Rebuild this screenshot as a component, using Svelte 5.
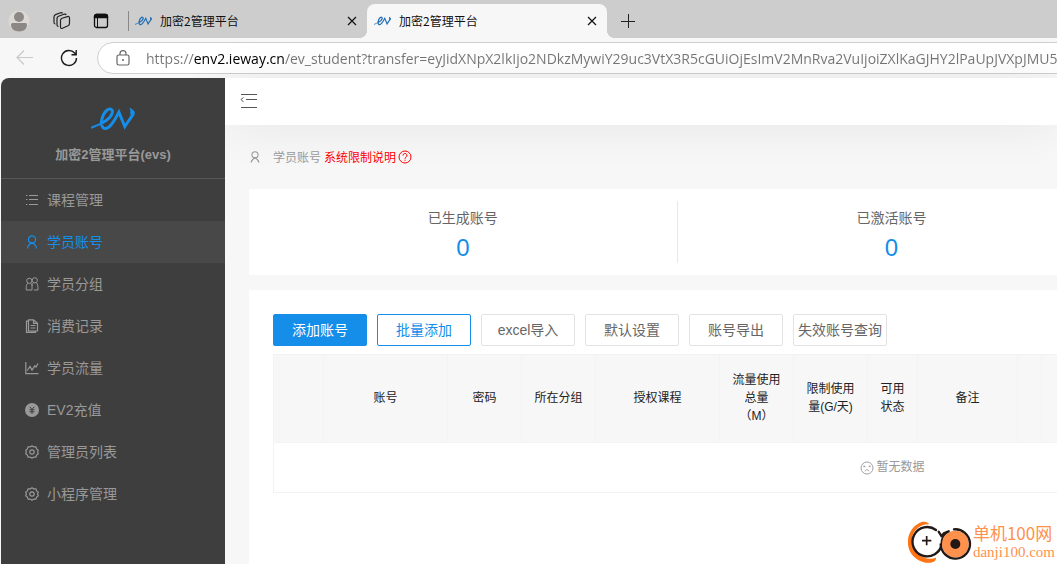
<script lang="ts">
	type MenuItem = {
		label: string;
		icon: string;
	};

	const tabs = [
		{ id: 1, title: '加密2管理平台' },
		{ id: 2, title: '加密2管理平台' }
	];

	const menu: MenuItem[] = [
		{ label: '课程管理', icon: 'list' },
		{ label: '学员账号', icon: 'user' },
		{ label: '学员分组', icon: 'group' },
		{ label: '消费记录', icon: 'file' },
		{ label: '学员流量', icon: 'chart' },
		{ label: 'EV2充值', icon: 'coin' },
		{ label: '管理员列表', icon: 'gear' },
		{ label: '小程序管理', icon: 'gear' }
	];

	const stats = [
		{ label: '已生成账号', value: 0 },
		{ label: '已激活账号', value: 0 }
	];

	const actions = [
		{ label: '添加账号', kind: 'primary' },
		{ label: '批量添加', kind: 'outline' },
		{ label: 'excel导入', kind: '' },
		{ label: '默认设置', kind: '' },
		{ label: '账号导出', kind: '' },
		{ label: '失效账号查询', kind: '' }
	];

	const columns = [
		{ title: '', width: 50 },
		{ title: '账号', width: 124 },
		{ title: '密码', width: 74 },
		{ title: '所在分组', width: 74 },
		{ title: '授权课程', width: 124 },
		{ title: '流量使用总量（M）', width: 74 },
		{ title: '限制使用量(G/天)', width: 74 },
		{ title: '可用状态', width: 50 },
		{ title: '备注', width: 100 },
		{ title: '', width: 24 },
		{ title: '', width: 470 }
	];

	let activeTab = $state(2);
	let activeMenu = $state('学员账号');
	let address = $state(
		'https://env2.ieway.cn/ev_student?transfer=eyJidXNpX2lkIjo2NDkzMywiY29uc3VtX3R5cGUiOjEsImV2MnRva2VuIjoiZXlKaGJHY2lPaUpJVXpJMU5pSXN'
	);
</script>

{#snippet evLogo()}
	<svg class="ev" viewBox="0 0 134 70" fill="none" stroke="currentColor" aria-hidden="true">
		<path d="M2 61C14 56 24 52 32 48" stroke-width="6" stroke-linecap="round" />
		<path
			d="M30 49C50 39 63 26 65 15C66 3 56 2 48 9C34 21 26 51 37 62C52 72 71 42 85 14L103 58C112 43 124 30 129 18"
			stroke-width="9"
		/>
		<path d="M117 1C124 3 132 10 134 15Q132 22 127 27L119 19C121 12 120 7 117 1Z" fill="currentColor" stroke="none" />
	</svg>
{/snippet}

{#snippet closeIcon()}
	<svg width="10" height="10" viewBox="0 0 10 10" aria-hidden="true">
		<path d="M1 1l8 8M9 1L1 9" stroke="currentColor" stroke-width="1.2" fill="none" />
	</svg>
{/snippet}

{#snippet icon(name: string)}
	<svg
		class="icon"
		viewBox="0 0 14 14"
		fill="none"
		stroke="currentColor"
		stroke-width="1.2"
		aria-hidden="true"
	>
		{#if name === 'list'}
			<path d="M4 2.5h9M4 6.5h9M4 11.5h9M1 2.5h1.4M1 6.5h1.4M1 11.5h1.4" stroke-width="1" />
		{:else if name === 'user'}
			<circle cx="7" cy="4.500" r="3.600" />
			<path d="M2.500 13.500C2.600 10.500 4.300 9.300 7 7.800C9.700 9.300 11.400 10.500 11.500 13.500M4.800 7.200L7 8.300L9.200 7.200" />
		{:else if name === 'group'}
			<circle cx="4.300" cy="3.800" r="2.600" stroke-width="1" />
			<circle cx="9.800" cy="3.300" r="2.600" stroke-width="1" />
			<path d="M3 6.200C1.200 7.300 1.200 9 1.200 13H7V8.600C7 7.500 6.300 6.700 5.600 6.200M11.200 5.800C12.800 7 13 9 13 13H8.800M7 9C7 7.300 7.700 6.300 8.600 5.800" stroke-width="1" />
		{:else if name === 'file'}
			<path d="M3.500.8H8.500L12.500 4.300V12H3.500ZM8.500.8V4.300H12.500M3.500 2.200H1.500V13.400H10.500V12M5.500 6.500h5M5.500 9h5" />
		{:else if name === 'chart'}
			<path d="M.8 1V12.600H13.500M2.300 9.500L5 5.500L7 9L9.800 4.800L11 6L13 2.500" />
		{:else if name === 'coin'}
			<circle cx="7" cy="7" r="7" fill="currentColor" stroke="none" />
			<path d="M4.800 3.800L7 6.500l2.200-2.700M4.500 6.800h5M4.500 8.800h5M7 6.500V11" stroke="#3e3e3e" stroke-width="1" />
		{:else}
			<path d="M7 .8L8.700 1.900L10.900 1.900L11.600 3.900L13.300 5.200L12.600 7L13.300 8.800L11.600 10.100L10.900 12.100L8.700 12.100L7 13.200L5.300 12.100L3.100 12.100L2.400 10.100L.7 8.800L1.400 7L.7 5.200L2.400 3.900L3.100 1.900L5.300 1.900Z" />
			<circle cx="7" cy="7" r="2.200" />
		{/if}
	</svg>
{/snippet}

<div class="browser">
	<header class="tab-strip">
		<div class="window-tools">
			<button type="button" aria-label="Profile">
				<svg width="22" height="22" viewBox="0 0 22 22">
					<circle cx="11" cy="11" r="10.500" fill="#dcd9d5" />
					<circle cx="11" cy="7" r="5" fill="#8b8886" />
					<path d="M3 15c0-1.400.8-2 2-2h12c1.200 0 2 .6 2 2c0 3.700-3.500 6.500-8 6.500S3 18.700 3 15Z" fill="#8b8886" />
				</svg>
			</button>
			<button type="button" aria-label="Workspaces">
				<svg width="18" height="18" viewBox="0 0 18 18" fill="none" stroke="#222" stroke-width="1.200">
					<path d="M9 6.300L14.500 4.600Q16.500 4 16.500 6V11.500Q16.500 13 15 13.800L9.500 16.300Q7.500 17 7.500 15V8.500Q7.500 7 9 6.300Z" />
					<path d="M5.500 14.500Q4 14.500 4 12.800V6.500Q4 5 5.500 4.300L11 2.200Q12.800 1.700 13.200 3" />
					<path d="M2.500 12Q1 12 1 10.500V5Q1 3.300 2.500 2.600L7.500.8Q9 .5 9.600 1.300" />
				</svg>
			</button>
			<button type="button" aria-label="Tab actions">
				<svg width="16" height="16" viewBox="0 0 16 16" fill="none" stroke="#111" stroke-width="1.300">
					<rect x="1.500" y="1.500" width="13" height="13" rx="2" />
					<path d="M1.500 3.500Q1.500 1.500 3.500 1.500h9Q14.500 1.500 14.500 3.500V4.500h-13Z" fill="#111" />
					<path d="M4.500 5v9.500" stroke-width="1" />
				</svg>
			</button>
		</div>
		{#each tabs as tab (tab.id)}
			<div class="tab" class:active={activeTab === tab.id}>
				<button type="button" class="tab-title" onclick={() => (activeTab = tab.id)}>
					{@render evLogo()}
					<span>{tab.title}</span>
				</button>
				<button type="button" class="tab-close" aria-label="Close tab">{@render closeIcon()}</button>
			</div>
		{/each}
		<button type="button" class="new-tab" aria-label="New tab">
			<svg width="14" height="14" viewBox="0 0 14 14">
				<path d="M7.500 0v14M0 7.500h14" stroke="#222" />
			</svg>
		</button>
	</header>

	<div class="toolbar">
		<button type="button" aria-label="Back" disabled>
			<svg width="18" height="16" viewBox="0 0 18 16" fill="none" stroke="#c9c9c9" stroke-width="1.200">
				<path d="M17 7.500H1.500M8 .5l-7 7l7 7" />
			</svg>
		</button>
		<button type="button" aria-label="Reload">
			<svg width="18" height="18" viewBox="0 0 18 18" fill="none" stroke="#1b1b1b" stroke-width="1.400">
				<path d="M16.500 9A7.500 7.500 0 1 1 14.600 4L16 5.500M16.200 1V5.700H11.500" />
			</svg>
		</button>
		<div class="address">
			<svg width="14" height="16" viewBox="0 0 14 16" fill="none" stroke="#666" stroke-width="1.200" aria-hidden="true">
				<rect x="1" y="5" width="12" height="10" rx="1.800" />
				<path d="M4 5V3.600a3 3 0 0 1 6 0V5" />
				<circle cx="7" cy="10" r="1" fill="#666" stroke="none" />
			</svg>
			<input type="text" aria-label="Address" spellcheck="false" bind:value={address} />
		</div>
	</div>

	<div class="app">
		<aside class="sidebar">
			<div class="brand">
				{@render evLogo()}
				<h1>加密2管理平台(evs)</h1>
			</div>
			<nav>
				{#each menu as item}
					<a
						href="#{item.label}"
						class:active={activeMenu === item.label}
						onclick={() => (activeMenu = item.label)}
					>
						{@render icon(item.icon)}
						<span>{item.label}</span>
					</a>
				{/each}
			</nav>
		</aside>

		<main>
			<div class="topbar">
				<button type="button" aria-label="Collapse menu">
					<svg width="18" height="16" viewBox="0 0 18 16" fill="none" stroke="#555">
						<path d="M1 .5h16M6 5.500h11M1 13.500h16M3.500 3.500L1 5.500L3.500 8" />
					</svg>
				</button>
			</div>

			<div class="content">
				<div class="crumb">
					{@render icon('user')}
					<span>学员账号</span>
					<a href="#limits">
						<span>系统限制说明</span>
						<svg width="14" height="14" viewBox="0 0 14 14" fill="none" stroke="currentColor" aria-hidden="true">
							<circle cx="7" cy="7" r="6" />
							<path d="M5 5.500a2 2 0 1 1 3 1.700q-1 .5-1 1.600M7 9.700v1.100" />
						</svg>
					</a>
				</div>

				<section class="card stats">
					{#each stats as stat}
						<div class="stat">
							<span>{stat.label}</span>
							<strong>{stat.value}</strong>
						</div>
					{/each}
				</section>

				<section class="card accounts">
					<div class="actions">
						{#each actions as action}
							<button type="button" class={action.kind}>{action.label}</button>
						{/each}
					</div>
					<table>
						<colgroup>
							{#each columns as column}
								<col style={`width: ${column.width}px`} />
							{/each}
						</colgroup>
						<thead>
							<tr>
								{#each columns as column}
									<th>{column.title}</th>
								{/each}
							</tr>
						</thead>
						<tbody>
							<tr>
								<td colspan={columns.length}>
									<div class="empty">
										<svg width="14" height="14" viewBox="0 0 14 14" fill="none" stroke="currentColor" aria-hidden="true">
											<circle cx="7" cy="7" r="6" stroke-width=".9" />
											<path d="M4.800 10.300Q7 7 9.200 10.300M3.300 5.500h2M8.700 5.500h2M3.800 4.200l1 2M10.200 4.200l-1 2" stroke-width=".8" />
										</svg>
										<span>暂无数据</span>
									</div>
								</td>
							</tr>
						</tbody>
					</table>
				</section>
			</div>
		</main>
	</div>

	<div class="watermark">
		<svg width="64" height="44" viewBox="0 0 192 132" fill="none" aria-hidden="true">
			<path d="M64 13C59 5 47 2 34 9C-8 30-12 91 25 116C40 127 61 132 75 126C81 124 85 118 84 113C67 120 45 116 29 101C3 78 6 42 32 22C41 15 52 12 64 13Z" fill="#ff7414" />
			<path d="M84 30A44 44 0 1 0 101 72Q102 46 115 39" stroke="#231815" stroke-width="7" stroke-linecap="round" />
			<path d="M56 48v28M42 62h28" stroke="#231815" stroke-width="5" />
			<circle cx="142" cy="72" r="40" fill="#ff914d" />
			<path d="M92 35L100 48L108 40L122 34M138 28A44 44 0 1 1 98 73" stroke="#231815" stroke-width="7" stroke-linecap="round" />
			<circle cx="142" cy="72" r="15" fill="#231815" />
		</svg>
		<div class="watermark-text">
			<span>单机100网</span>
			<small>danji100.com</small>
		</div>
	</div>
</div>

<style>
	:global(body) {
		margin: 0;
	}

	.browser {
		position: relative;
		display: flex;
		flex-direction: column;
		height: 100vh;
		overflow: hidden;
		background: #f7f7f7;
		color: #666;
		font-family: 'Liberation Sans', 'Noto Sans CJK SC', sans-serif;
		font-size: 14px;
	}

	button {
		padding: 0;
		border: 0;
		background: none;
		color: inherit;
		font: inherit;
		cursor: pointer;
	}

	svg {
		display: block;
		flex: none;
	}

	a {
		color: inherit;
		text-decoration: none;
	}

	.tab-strip {
		display: flex;
		flex: none;
		height: 38px;
		background: #cdcdcd;
		color: #111;
	}

	.window-tools {
		display: flex;
		align-items: center;
		justify-content: space-between;
		box-sizing: border-box;
		width: 128px;
		padding: 4px 19px 0 8px;
	}

	.tab {
		position: relative;
		display: flex;
		align-items: center;
		box-sizing: border-box;
		width: 239px;
		margin-top: 4px;
		padding: 0 10px 0 7px;
		border-radius: 8px 8px 0 0;
		font-family: 'Noto Sans CJK SC', sans-serif;
		font-size: 12px;
	}

	.tab:not(.active)::before {
		position: absolute;
		top: 7px;
		left: 0;
		width: 1px;
		height: 20px;
		background: #888;
		content: '';
	}

	.tab.active {
		width: 240px;
		background: #f7f7f7;
	}

	/* curved feet of the selected tab */
	.tab.active::before,
	.tab.active::after {
		position: absolute;
		bottom: 0;
		width: 8px;
		height: 8px;
		content: '';
	}

	.tab.active::before {
		right: 100%;
		background: radial-gradient(circle at 0 0, #cdcdcd 8px, #f7f7f7 8px);
	}

	.tab.active::after {
		left: 100%;
		background: radial-gradient(circle at 100% 0, #cdcdcd 8px, #f7f7f7 8px);
	}

	.tab-title {
		display: flex;
		flex: 1;
		align-items: center;
		gap: 8px;
	}

	.tab-title span {
		padding-bottom: 2px;
	}

	.tab-title :global(.ev) {
		width: 17px;
		height: 10px;
		color: #1c6bb5;
	}

	.new-tab {
		margin: 4px 0 0 14px;
	}

	.toolbar {
		display: flex;
		flex: none;
		align-items: center;
		height: 40px;
		padding-left: 16px;
		gap: 26px;
	}

	.address {
		display: flex;
		flex: 1;
		align-items: center;
		box-sizing: border-box;
		height: 32px;
		margin-left: -7px;
		margin-right: -16px;
		padding-left: 18px;
		gap: 16px;
		border: 1px solid #cfcfcf;
		border-radius: 16px;
		background: #fff;
	}

	/* the host name is drawn darker than the rest of the address */
	.address input {
		flex: 1;
		min-width: 0;
		height: 24px;
		padding: 0;
		border: 0;
		outline: 0;
		background: linear-gradient(90deg, #757575 47px, #000 47px, #000 139px, #757575 139px);
		background-clip: text;
		-webkit-background-clip: text;
		color: transparent;
		caret-color: #000;
		font-family: 'Open Sans', 'Noto Sans', sans-serif;
		font-size: 14px;
	}

	.app {
		display: flex;
		flex: 1;
		min-height: 0;
		margin-left: 1px;
	}

	.sidebar {
		z-index: 1;
		flex: none;
		width: 224px;
		border-top-left-radius: 8px;
		background: #3e3e3e;
		color: #999;
	}

	.brand {
		display: flex;
		flex-direction: column;
		align-items: center;
		box-sizing: border-box;
		height: 101px;
		padding-top: 29px;
		border-bottom: 1px solid #585858;
	}

	.brand :global(.ev) {
		width: 44px;
		height: 24px;
		color: #148ee9;
	}

	.brand h1 {
		margin: 14px 0 0;
		font-size: 13px;
		font-weight: bold;
		line-height: 20px;
	}

	nav a {
		display: flex;
		align-items: center;
		height: 42px;
		padding-left: 24px;
		gap: 8px;
	}

	nav span,
	.crumb span,
	.empty span {
		padding-bottom: 2px;
	}

	nav a.active {
		background: #484848;
		color: #148ee9;
	}

	.icon {
		width: 14px;
		height: 14px;
	}

	main {
		flex: 1;
		min-width: 0;
	}

	.topbar {
		display: flex;
		align-items: center;
		height: 47px;
		padding-left: 15px;
		background: #fff;
		box-shadow: 0 2px 50px rgba(0, 0, 0, 0.07);
	}

	.content {
		position: relative;
		padding: 0 24px;
	}

	.crumb {
		display: flex;
		align-items: center;
		height: 64px;
		color: #999;
		font-size: 12px;
	}

	.crumb .icon {
		width: 12px;
		height: 12px;
		margin-right: 12px;
	}

	.crumb a {
		display: flex;
		align-items: center;
		gap: 2px;
		margin-left: 3px;
		color: #f00;
	}

	/* cards keep their full width and run on past a narrow window */
	.card {
		box-sizing: border-box;
		min-width: 1286px;
		border-radius: 2px;
		background: #fff;
	}

	.stats {
		display: grid;
		grid-template-columns: repeat(3, 1fr);
		padding: 12px 0;
	}

	.stat {
		display: flex;
		flex-direction: column;
		align-items: center;
		justify-content: flex-end;
		height: 62px;
		border-right: 1px solid #e8e8e8;
	}

	.stat span {
		line-height: 30px;
	}

	.stat strong {
		color: #148ee9;
		font-size: 24px;
		font-weight: normal;
		line-height: 30px;
	}

	.accounts {
		min-height: 300px;
		margin-top: 15px;
		padding: 24px;
	}

	.actions {
		display: flex;
		gap: 10px;
		margin-bottom: 8px;
	}

	.actions button {
		width: 94px;
		height: 32px;
		padding-bottom: 2px;
		border: 1px solid #e3e3e3;
		border-radius: 2px;
		background: #fff;
		white-space: nowrap;
	}

	.actions .primary {
		border-color: #148ee9;
		background: #148ee9;
		color: #fff;
	}

	.actions .outline {
		border-color: #148ee9;
		color: #148ee9;
	}

	table {
		width: 100%;
		border: 1px solid #f2f2f2;
		border-collapse: collapse;
		table-layout: fixed;
		font-size: 12px;
		line-height: 18px;
	}

	th {
		height: 88px;
		box-sizing: border-box;
		padding: 0 12px 2px;
		border: 1px solid #f3f3f3;
		background: #f7f7f7;
		color: #222;
		font-weight: normal;
	}

	td {
		height: 49px;
		padding: 0;
		border: 1px solid #f2f2f2;
		color: #999;
	}

	.empty {
		display: flex;
		align-items: center;
		justify-content: center;
		gap: 2px;
	}

	.watermark {
		position: absolute;
		right: 2px;
		bottom: 0;
		z-index: 2;
		display: flex;
		align-items: center;
		gap: 1px;
		color: #ff914d;
	}

	.watermark-text {
		display: flex;
		flex-direction: column;
	}

	.watermark-text span {
		font-family: 'Noto Sans CJK SC', sans-serif;
		font-size: 17px;
		line-height: 20px;
	}

	.watermark-text small {
		font-family: 'Liberation Serif', serif;
		font-size: 15px;
		line-height: 18px;
	}
</style>
